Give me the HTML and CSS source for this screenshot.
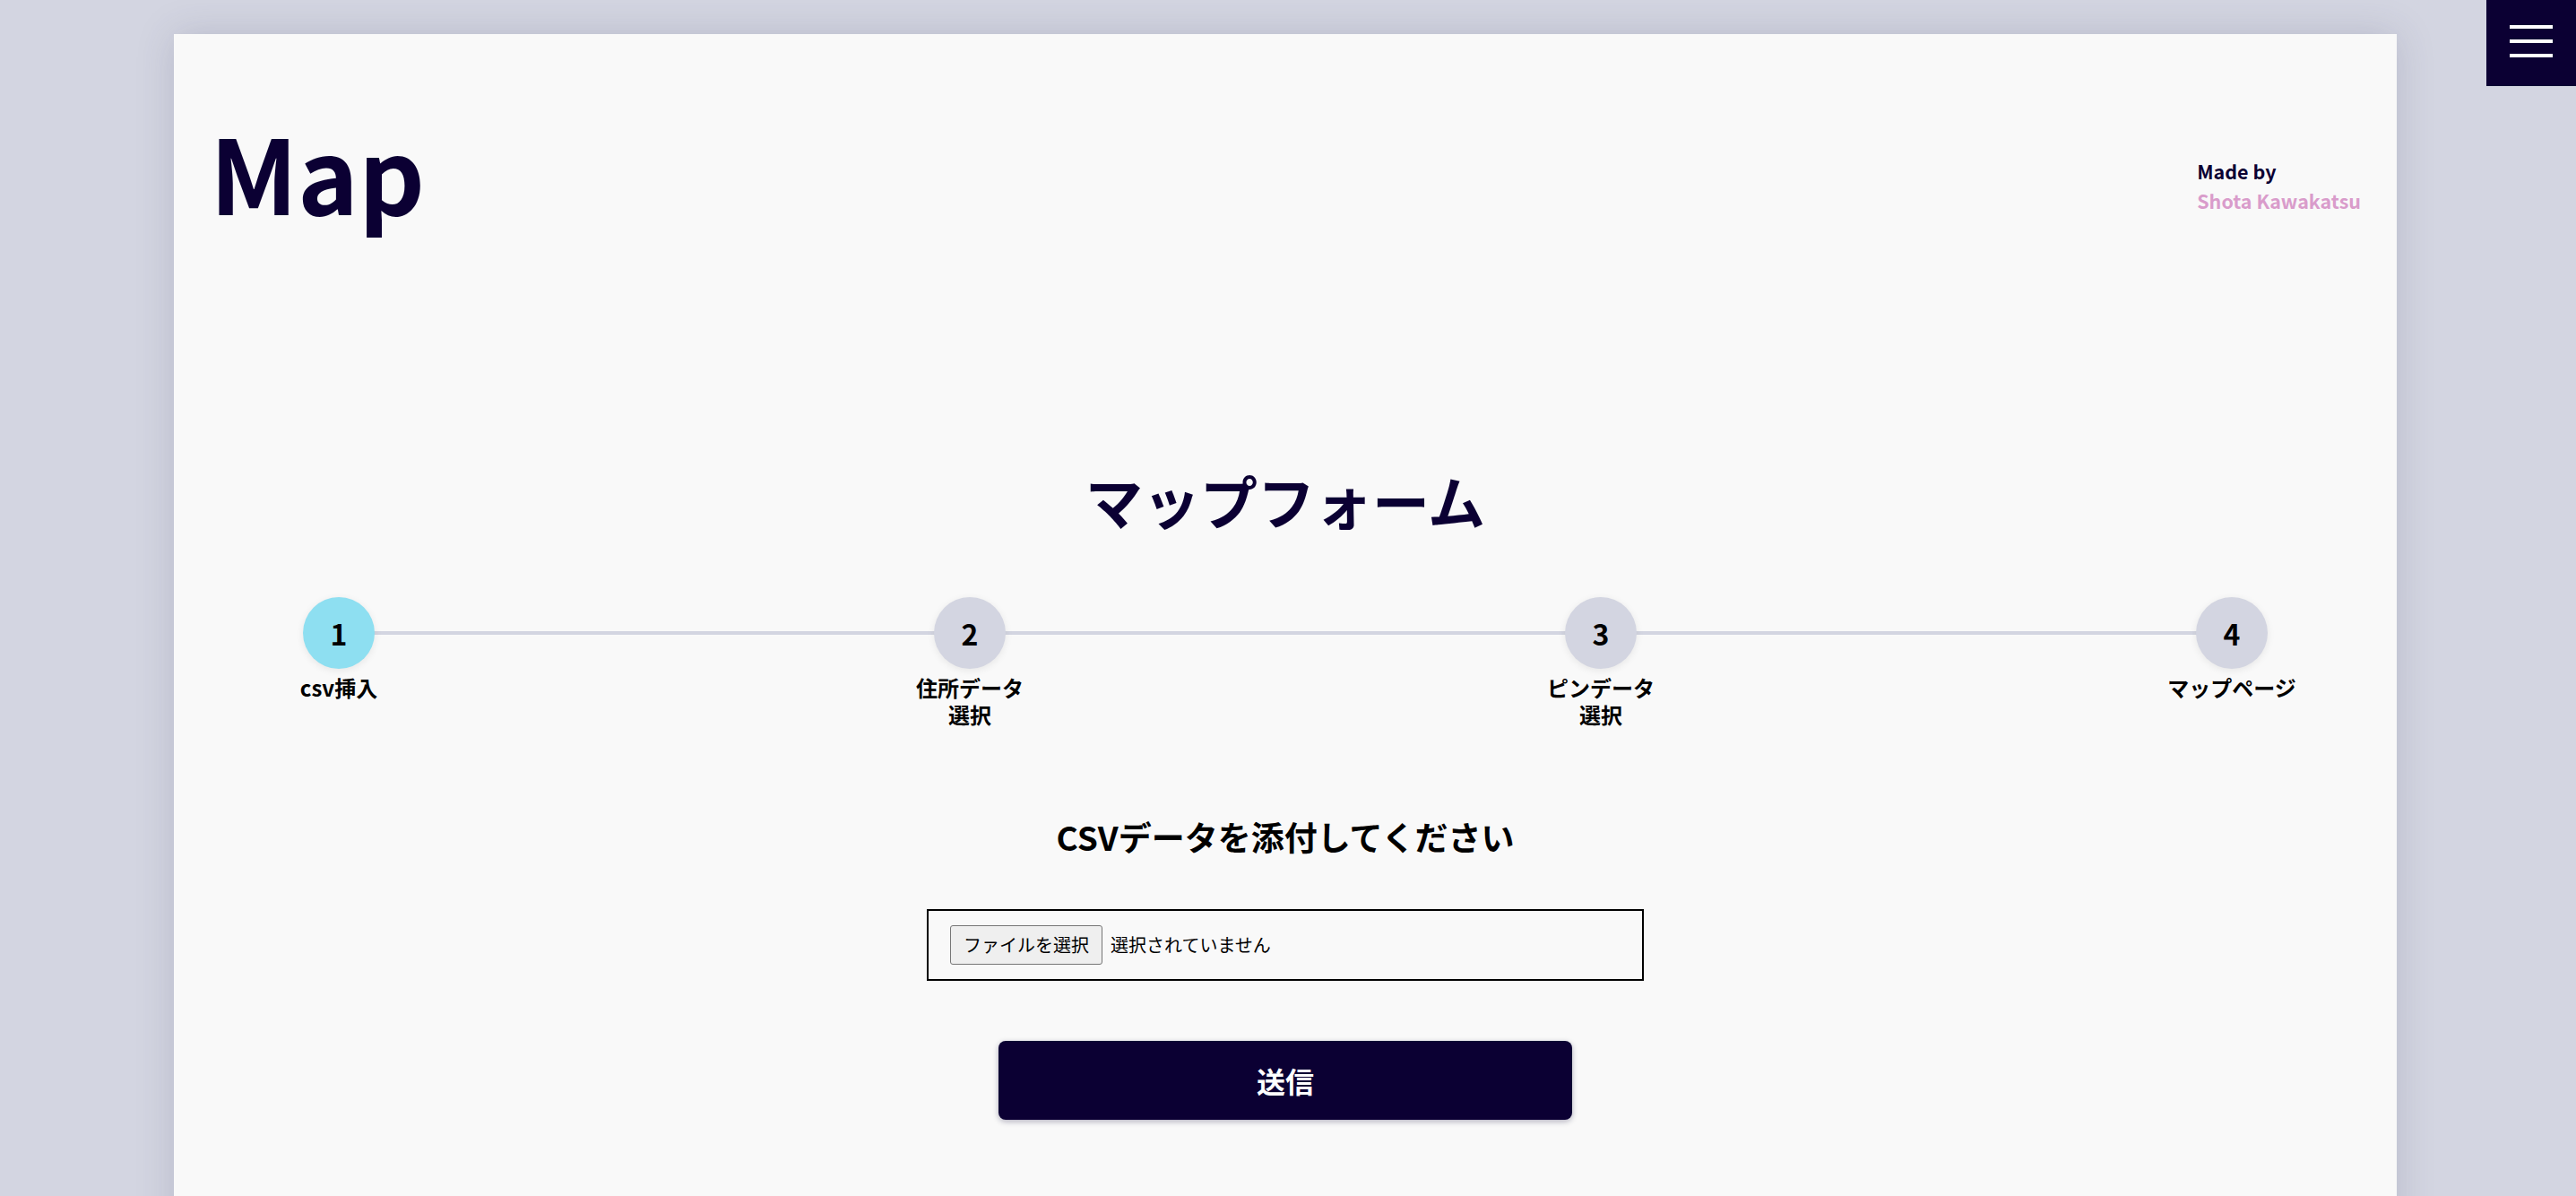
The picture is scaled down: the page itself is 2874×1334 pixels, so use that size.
FILE: index.html
```html
<!DOCTYPE html>
<html lang="ja">
<head>
<meta charset="utf-8">
<title>Map</title>
<link rel="stylesheet" href="styles.css">
</head>
<body>
<button class="menu-btn" type="button" aria-label="menu">
  <span class="bar"></span><span class="bar"></span><span class="bar"></span>
</button>
<div class="page">
  <div class="card">
    <header class="header">
      <h1 class="logo">Map</h1>
      <div class="credit">
        <div class="credit-label">Made by</div>
        <div class="credit-name">Shota Kawakatsu</div>
      </div>
    </header>
    <main class="main">
      <h2 class="form-title">マップフォーム</h2>
      <ol class="stepper">
        <li class="step active"><span class="step-num">1</span><span class="step-label">csv挿入</span></li>
        <li class="step"><span class="step-num">2</span><span class="step-label">住所データ<br>選択</span></li>
        <li class="step"><span class="step-num">3</span><span class="step-label">ピンデータ<br>選択</span></li>
        <li class="step"><span class="step-num">4</span><span class="step-label">マップページ</span></li>
      </ol>
      <form class="upload-form">
        <h3 class="upload-title">CSVデータを添付してください</h3>
        <div class="file-box">
          <label class="file-btn">ファイルを選択<input class="file-input" type="file" accept=".csv"></label>
          <span class="file-status">選択されていません</span>
        </div>
        <button class="submit-btn" type="submit">送信</button>
      </form>
    </main>
  </div>
</div>
</body>
</html>
```
FILE: styles.css
```css
* { box-sizing: border-box; }

html, body {
  margin: 0;
  padding: 0;
}

body {
  background: #d3d5e1;
  font-family: "Noto Sans CJK JP", "Noto Sans", sans-serif;
  color: #000;
  overflow: hidden;
}

.menu-btn {
  position: fixed;
  top: 0;
  right: 0;
  width: 100px;
  height: 96px;
  background: #0b0033;
  border: none;
  padding: 28px 0 0;
  display: flex;
  flex-direction: column;
  align-items: center;
  gap: 12px;
  z-index: 10;
}

.bar {
  display: block;
  width: 48px;
  height: 4px;
  background: #fff;
}

.page {
  padding: 38px 6px 0 0;
}

.card {
  width: 2480px;
  margin: 0 auto;
  min-height: 1400px;
  background: #f9f9f9;
  box-shadow: 0 0 40px rgba(60, 60, 100, 0.18);
  padding: 95px 40px 80px 40px;
}

.header {
  display: flex;
  justify-content: space-between;
  align-items: flex-start;
}

.logo {
  margin: 0;
  font-size: 115px;
  line-height: 1;
  font-weight: 700;
  color: #0b0033;
}

.credit {
  margin-top: 41px;
  font-size: 21.5px;
  line-height: 33px;
  font-weight: 700;
}

.credit-label { color: #0b0033; }
.credit-name { color: #d99ccb; }

.main {
  display: flex;
  flex-direction: column;
  align-items: center;
  padding-top: 261px;
}

.form-title {
  margin: 0;
  font-size: 64px;
  line-height: 96px;
  font-weight: 700;
  color: #0b0033;
}

.stepper {
  position: relative;
  list-style: none;
  margin: 61px 0 0;
  padding: 0;
  width: 2272px;
  display: flex;
  justify-content: space-between;
}

.stepper::before {
  content: "";
  position: absolute;
  left: 80px;
  right: 80px;
  top: 38px;
  height: 4px;
  background: #d3d5e1;
}

.step {
  position: relative;
  width: 160px;
  display: flex;
  flex-direction: column;
  align-items: center;
}

.step-num {
  width: 80px;
  height: 80px;
  border-radius: 50%;
  background: #d3d5e1;
  box-shadow: 0 2px 8px rgba(0, 0, 0, 0.08);
  display: flex;
  align-items: center;
  justify-content: center;
  font-size: 32px;
  font-weight: 700;
  color: #000;
}

.step.active .step-num {
  background: #8edff1;
}

.step-label {
  margin-top: 6px;
  width: 160px;
  text-align: center;
  font-size: 24px;
  line-height: 30px;
  font-weight: 700;
  color: #000;
}

.upload-form {
  display: flex;
  flex-direction: column;
  align-items: center;
}

.upload-title {
  margin: 93px 0 0;
  font-size: 37px;
  line-height: 56px;
  font-weight: 700;
  color: #000;
}

.file-box {
  margin-top: 53px;
  width: 800px;
  height: 80px;
  border: 2px solid #000;
  padding: 16px 24px;
  display: flex;
  align-items: center;
  gap: 9px;
  font-size: 20px;
  color: #000;
}

.file-btn {
  height: 44px;
  padding: 0 14px;
  display: flex;
  align-items: center;
  background: #efefef;
  border: 1px solid #767676;
  border-radius: 3px;
  font-size: 20px;
  line-height: 1;
}

.file-input {
  display: none;
}

.file-status {
  line-height: 1;
}

.submit-btn {
  margin-top: 67px;
  width: 640px;
  height: 88px;
  border: none;
  border-radius: 8px;
  background: #0b0033;
  color: #fff;
  font-family: "Noto Sans CJK JP", sans-serif;
  font-size: 32px;
  font-weight: 700;
  box-shadow: 0 2px 6px rgba(11, 0, 51, 0.3);
}
```
